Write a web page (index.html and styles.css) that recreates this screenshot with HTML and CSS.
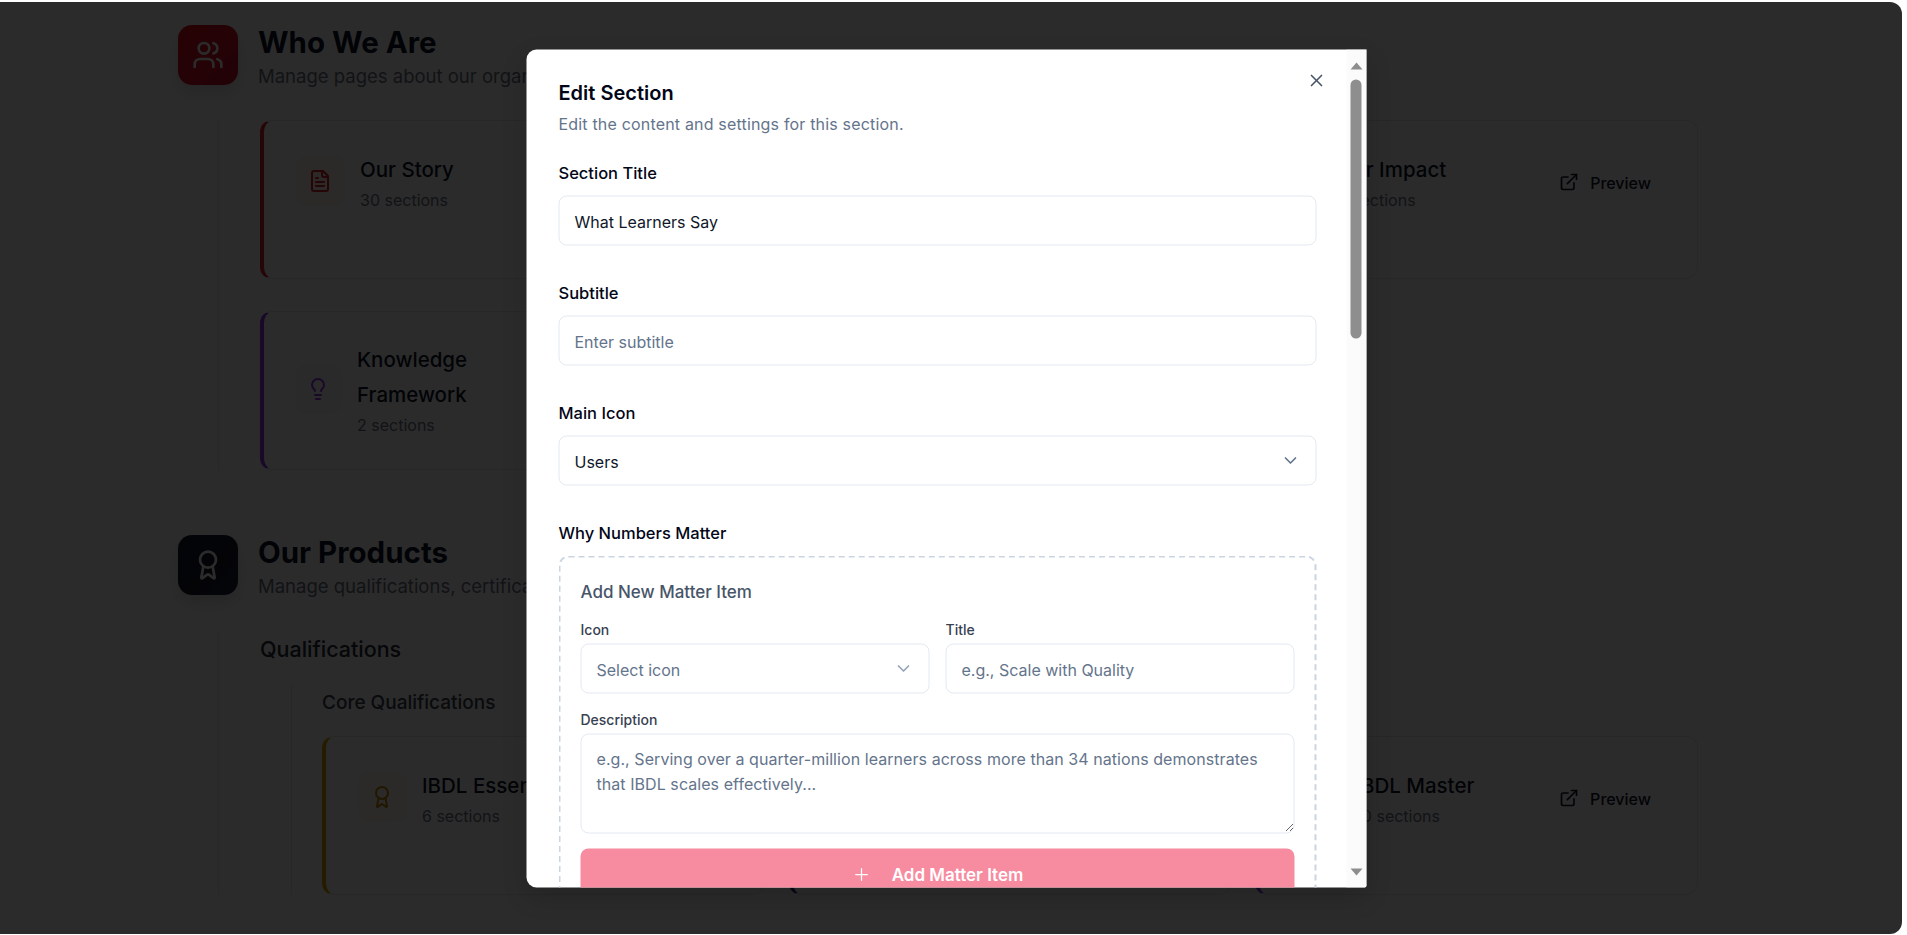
FILE: index.html
```html
<!DOCTYPE html>
<html lang="en">
<head>
<meta charset="utf-8">
<title>Edit Section</title>
<link rel="stylesheet" href="styles.css">
</head>
<body>
<svg class="sprite" width="0" height="0" aria-hidden="true">
  <symbol id="i-users" viewBox="0 0 24 24"><path d="M16 21v-2a4 4 0 0 0-4-4H6a4 4 0 0 0-4 4v2"/><circle cx="9" cy="7" r="4"/><path d="M22 21v-2a4 4 0 0 0-3-3.87"/><path d="M16 3.13a4 4 0 0 1 0 7.75"/></symbol>
  <symbol id="i-award" viewBox="0 0 24 24"><path d="m15.477 12.89 1.515 8.526a.5.5 0 0 1-.81.47l-3.58-2.687a1 1 0 0 0-1.197 0l-3.586 2.686a.5.5 0 0 1-.81-.469l1.514-8.526"/><circle cx="12" cy="8" r="6"/></symbol>
  <symbol id="i-file" viewBox="0 0 24 24"><path d="M15 2H6a2 2 0 0 0-2 2v16a2 2 0 0 0 2 2h12a2 2 0 0 0 2-2V7Z"/><path d="M14 2v4a2 2 0 0 0 2 2h4"/><path d="M10 9H8"/><path d="M16 13H8"/><path d="M16 17H8"/></symbol>
  <symbol id="i-bulb" viewBox="0 0 24 24"><path d="M15 14c.2-1 .7-1.7 1.5-2.5 1-.9 1.5-2.2 1.5-3.5A6 6 0 0 0 6 8c0 1 .2 2.2 1.5 3.5.7.7 1.3 1.5 1.5 2.5"/><path d="M9 18h6"/><path d="M10 22h4"/></symbol>
  <symbol id="i-link" viewBox="0 0 24 24"><path d="M15 3h6v6"/><path d="M10 14 21 3"/><path d="M18 13v6a2 2 0 0 1-2 2H5a2 2 0 0 1-2-2V8a2 2 0 0 1 2-2h6"/></symbol>
  <symbol id="i-chevron" viewBox="0 0 24 24"><path d="m6 9 6 6 6-6"/></symbol>
  <symbol id="i-x" viewBox="0 0 24 24"><path d="M18 6 6 18"/><path d="m6 6 12 12"/></symbol>
  <symbol id="i-plus" viewBox="0 0 24 24"><path d="M5 12h14"/><path d="M12 5v14"/></symbol>
</svg>

<div class="window">
  <main class="page">
    <section class="group group--first">
      <header class="group-head">
        <div class="group-icon group-icon--red"><svg class="icon icon--32"><use href="#i-users"/></svg></div>
        <div>
          <h2 class="group-title">Who We Are</h2>
          <p class="group-sub">Manage pages about our organization</p>
        </div>
      </header>
      <div class="rail">
        <div class="cards">
          <article class="card card--red">
            <div class="tile tile--red"><svg class="icon icon--24"><use href="#i-file"/></svg></div>
            <div class="card-text"><h3 class="card-title">Our Story</h3><p class="card-meta">30 sections</p></div>
          </article>
          <article class="card card--plain"></article>
          <article class="card card--blue">
            <div class="tile tile--wide"></div>
            <div class="card-text"><h3 class="card-title">Our Impact</h3><p class="card-meta">8 sections</p></div>
            <a class="preview"><svg class="icon icon--20"><use href="#i-link"/></svg>Preview</a>
          </article>
          <article class="card card--purple">
            <div class="tile tile--narrow tile--purple"><svg class="icon icon--24"><use href="#i-bulb"/></svg></div>
            <div class="card-text card-text--up"><h3 class="card-title">Knowledge<br>Framework</h3><p class="card-meta">2 sections</p></div>
          </article>
        </div>
      </div>
    </section>

    <section class="group">
      <header class="group-head">
        <div class="group-icon group-icon--navy"><svg class="icon icon--32"><use href="#i-award"/></svg></div>
        <div>
          <h2 class="group-title">Our Products</h2>
          <p class="group-sub">Manage qualifications, certifications</p>
        </div>
      </header>
      <div class="rail">
        <h3 class="sub-title">Qualifications</h3>
        <div class="rail rail--nested">
          <h4 class="sub-sub-title">Core Qualifications</h4>
          <div class="cards">
            <article class="card card--amber">
              <div class="tile tile--amber"><svg class="icon icon--24"><use href="#i-award"/></svg></div>
              <div class="card-text"><h3 class="card-title">IBDL Essential</h3><p class="card-meta">6 sections</p></div>
            </article>
            <article class="card card--navy"></article>
            <article class="card card--purple">
              <div class="tile"></div>
              <div class="card-text"><h3 class="card-title">IBDL Master</h3><p class="card-meta">10 sections</p></div>
              <a class="preview"><svg class="icon icon--20"><use href="#i-link"/></svg>Preview</a>
            </article>
          </div>
        </div>
      </div>
    </section>
  </main>

  <div class="overlay"></div>

  <div class="modal" role="dialog">
    <div class="modal-body">
      <h2 class="modal-title">Edit Section</h2>
      <p class="modal-desc">Edit the content and settings for this section.</p>

      <div class="field">
        <label class="label">Section Title</label>
        <input class="input" value="What Learners Say">
      </div>
      <div class="field">
        <label class="label">Subtitle</label>
        <input class="input" placeholder="Enter subtitle">
      </div>
      <div class="field">
        <label class="label">Main Icon</label>
        <div class="select"><span>Users</span><svg class="icon icon--20 chevron"><use href="#i-chevron"/></svg></div>
      </div>
      <div class="field field--last">
        <label class="label">Why Numbers Matter</label>
        <div class="dashed">
          <h4 class="dashed-title">Add New Matter Item</h4>
          <div class="two-col">
            <div>
              <label class="mini-label">Icon</label>
              <div class="select select--placeholder"><span>Select icon</span><svg class="icon icon--20 chevron chevron--soft"><use href="#i-chevron"/></svg></div>
            </div>
            <div>
              <label class="mini-label">Title</label>
              <input class="input" placeholder="e.g., Scale with Quality">
            </div>
          </div>
          <label class="mini-label mini-label--spaced">Description</label>
          <textarea class="textarea" placeholder="e.g., Serving over a quarter-million learners across more than 34 nations demonstrates that IBDL scales effectively..."></textarea>
          <button class="add-btn" type="button"><svg class="icon icon--plus"><use href="#i-plus"/></svg>Add Matter Item</button>
        </div>
      </div>
    </div>

    <button class="close" type="button" aria-label="Close"><svg class="icon icon--20"><use href="#i-x"/></svg></button>

    <div class="scrollbar" aria-hidden="true">
      <span class="arrow arrow--up"></span>
      <div class="track"><div class="thumb"></div></div>
      <span class="arrow arrow--down"></span>
    </div>
  </div>
</div>
</body>
</html>
```

FILE: styles.css
```css
* { box-sizing: border-box; }

html, body {
  margin: 0;
  height: 100%;
  background: #fff;
  overflow: hidden;
  font-family: Inter, "Liberation Sans", sans-serif;
  color: #0f172a;
}

h2, h3, h4, p { margin: 0; }

.sprite { position: absolute; }

.icon {
  display: block;
  fill: none;
  stroke: currentColor;
  stroke-width: 2;
  stroke-linecap: round;
  stroke-linejoin: round;
  flex: none;
}
.icon--32 { width: 32px; height: 32px; }
.icon--24 { width: 24px; height: 24px; }
.icon--20 { width: 20px; height: 20px; }
.icon--plus { width: 20px; height: 20px; stroke-width: 1.5; }

.window {
  position: relative;
  height: 932px;
  margin: 2px 5px 0 0;
  border-radius: 0 12px 12px 0;
  overflow: hidden;
  background: #fff;
}

.page { padding: 23px 204px 0 178px; }

.group { margin-top: 65px; }
.group--first { margin-top: 0; }

.group-head { display: flex; gap: 20px; height: 60px; }

.group-icon {
  width: 60px;
  height: 60px;
  border-radius: 14px;
  display: flex;
  align-items: center;
  justify-content: center;
  color: #fff;
  box-shadow: 0 8px 16px rgba(0, 0, 0, .12);
}
.group-icon--red { background: linear-gradient(135deg, #e60f1e, #c8102e); }
.group-icon--navy { background: linear-gradient(135deg, #111827, #1e2033); }

.group-title { font-size: 29.5px; line-height: 34px; font-weight: 700; }
.group-sub { margin-top: 3px; font-size: 18.5px; line-height: 28px; color: #6b7280; white-space: nowrap; }

.rail {
  margin: 35px 0 0 40px;
  padding-left: 41px;
  border-left: 1px solid #e5e7eb;
}
.rail--nested { margin: 0 0 0 31px; padding-left: 30px; }

.sub-title { font-size: 21.5px; line-height: 36px; font-weight: 500; color: #1f2937; padding-top: 1px; margin-bottom: 17px; }
.sub-sub-title { font-size: 19px; line-height: 34px; font-weight: 500; padding-top: 2px; margin-bottom: 16px; color: #374151; }

.cards { display: grid; grid-template-columns: repeat(3, 1fr); gap: 32px 24px; }

.card {
  display: flex;
  align-items: flex-start;
  gap: 15px;
  min-height: 159px;
  padding: 31px 31px 31px 32px;
  background: #fff;
  border: 1px solid #e5e7eb;
  border-left-width: 4px;
  border-radius: 12px;
}
.card--plain { border-left-color: #e5e7eb; }
.card--blue { border-left-color: #2563eb; }
.card--red { border-left-color: #dc1f26; }
.card--purple { border-left-color: #9333ea; }
.card--amber { border-left-color: #dba400; }
.card--navy { border-left-color: #1e2a78; }

.tile {
  width: 49px;
  height: 50px;
  margin-top: 4px;
  padding-right: 2px;
  border-radius: 10px;
  display: flex;
  align-items: center;
  justify-content: center;
  flex: none;
  background: #f8f6f4;
}
.tile--narrow { width: 46px; }
.tile--wide { width: 52px; }
.tile--red { color: #dc1f26; background: #fbf6f2; }
.tile--purple { color: #9333ea; background: #f7f5fb; margin-top: 21px; }
.tile--amber { color: #c58a00; background: #fbf8ef; }

.card-text { flex: 1; min-width: 0; }
.card-text--up { margin-top: -1px; }
.card-title { font-size: 20.5px; line-height: 35px; font-weight: 500; white-space: nowrap; }
.card-meta { margin-top: 1px; font-size: 16px; line-height: 24px; color: #6b7280; }

.preview {
  display: flex;
  align-items: center;
  gap: 11px;
  height: 40px;
  margin-top: 11px;
  padding-right: 15px;
  font-size: 16px;
  font-weight: 500;
}
.preview .icon { margin-top: -2px; }

.overlay {
  position: absolute;
  inset: 0;
  background: rgba(0, 0, 0, .83);
}

.modal {
  position: absolute;
  left: 527px;
  top: 47px;
  width: 840px;
  height: 838px;
  background: #fff;
  border-radius: 10px 0 2px 10px;
  overflow: hidden;
  box-shadow: 0 10px 24px rgba(0, 0, 0, .15);
  transform: translate(-.5px, .5px);
}

.modal-body { padding: 29px 50px 0 32px; }

.modal-title { font-size: 20px; line-height: 28px; font-weight: 600; color: #020617; }
.modal-desc { margin-top: 5px; font-size: 16px; line-height: 24px; color: #64748b; letter-spacing: .18px; }

.field { margin-top: 25px; margin-bottom: 35px; }
.field + .field { margin-top: 0; }
.field--last { margin-bottom: 0; }

.label {
  display: block;
  font-size: 16.5px;
  line-height: 24px;
  font-weight: 500;
  margin-bottom: 11px;
  color: #020617;
}

.input, .select, .textarea {
  display: block;
  width: 100%;
  border: 1px solid #e2e8f0;
  border-radius: 8px;
  background: #fff;
  font: 400 16px/24px Inter, "Liberation Sans", sans-serif;
  color: #0f172a;
}
.input { height: 50px; padding: 2px 15px 0; outline: none; }
.input::placeholder, .textarea::placeholder { color: #64748b; opacity: 1; }

.select {
  height: 50px;
  padding: 2px 15px 0;
  display: flex;
  align-items: center;
  justify-content: space-between;
}
.select--placeholder { color: #64748b; }

.chevron { color: #64748b; margin-top: -3px; }
.chevron--soft { color: #94a3b8; }

.dashed {
  border: 2px dashed #cbd5e1;
  border-radius: 10px;
  padding: 22px 20px 20px;
}

.dashed-title { font-size: 17px; line-height: 24px; font-weight: 500; color: #475569; margin-bottom: 16px; }

.two-col { display: grid; grid-template-columns: 1fr 1fr; gap: 16px; }

.mini-label {
  display: block;
  font-size: 14px;
  line-height: 20px;
  font-weight: 500;
  margin-bottom: 4px;
  color: #374151;
}
.mini-label--spaced { margin-top: 16px; }

.textarea {
  height: 100px;
  padding: 12px 12px 8px 15px;
  line-height: 25px;
  letter-spacing: .06px;
  outline: none;
  resize: vertical;
}

.add-btn {
  display: flex;
  align-items: center;
  justify-content: center;
  gap: 20px;
  width: 100%;
  height: 50px;
  margin-top: 15px;
  padding: 2px 0 0;
  border: 0;
  border-radius: 8px;
  background: #f78ba0;
  color: #fff;
  font: 600 17px/24px Inter, "Liberation Sans", sans-serif;
}

.close {
  position: absolute;
  top: 21px;
  right: 40px;
  width: 20px;
  height: 20px;
  padding: 0;
  border: 0;
  background: none;
  color: #475569;
}

.scrollbar {
  position: absolute;
  top: 0;
  right: 0;
  bottom: 0;
  width: 20px;
  padding: 13px 5px 12px 4px;
  background: #fbfbfb;
  display: flex;
  flex-direction: column;
  align-items: center;
}
.track { flex: 1; width: 11px; padding-top: 10px; }
.thumb { height: 259px; border-radius: 6px; background: #8e8e8e; }
.arrow { width: 0; height: 0; border-left: 6.5px solid transparent; border-right: 6.5px solid transparent; }
.arrow--up { border-bottom: 7px solid #8e8e8e; }
.arrow--down { border-top: 7px solid #8e8e8e; }
```
